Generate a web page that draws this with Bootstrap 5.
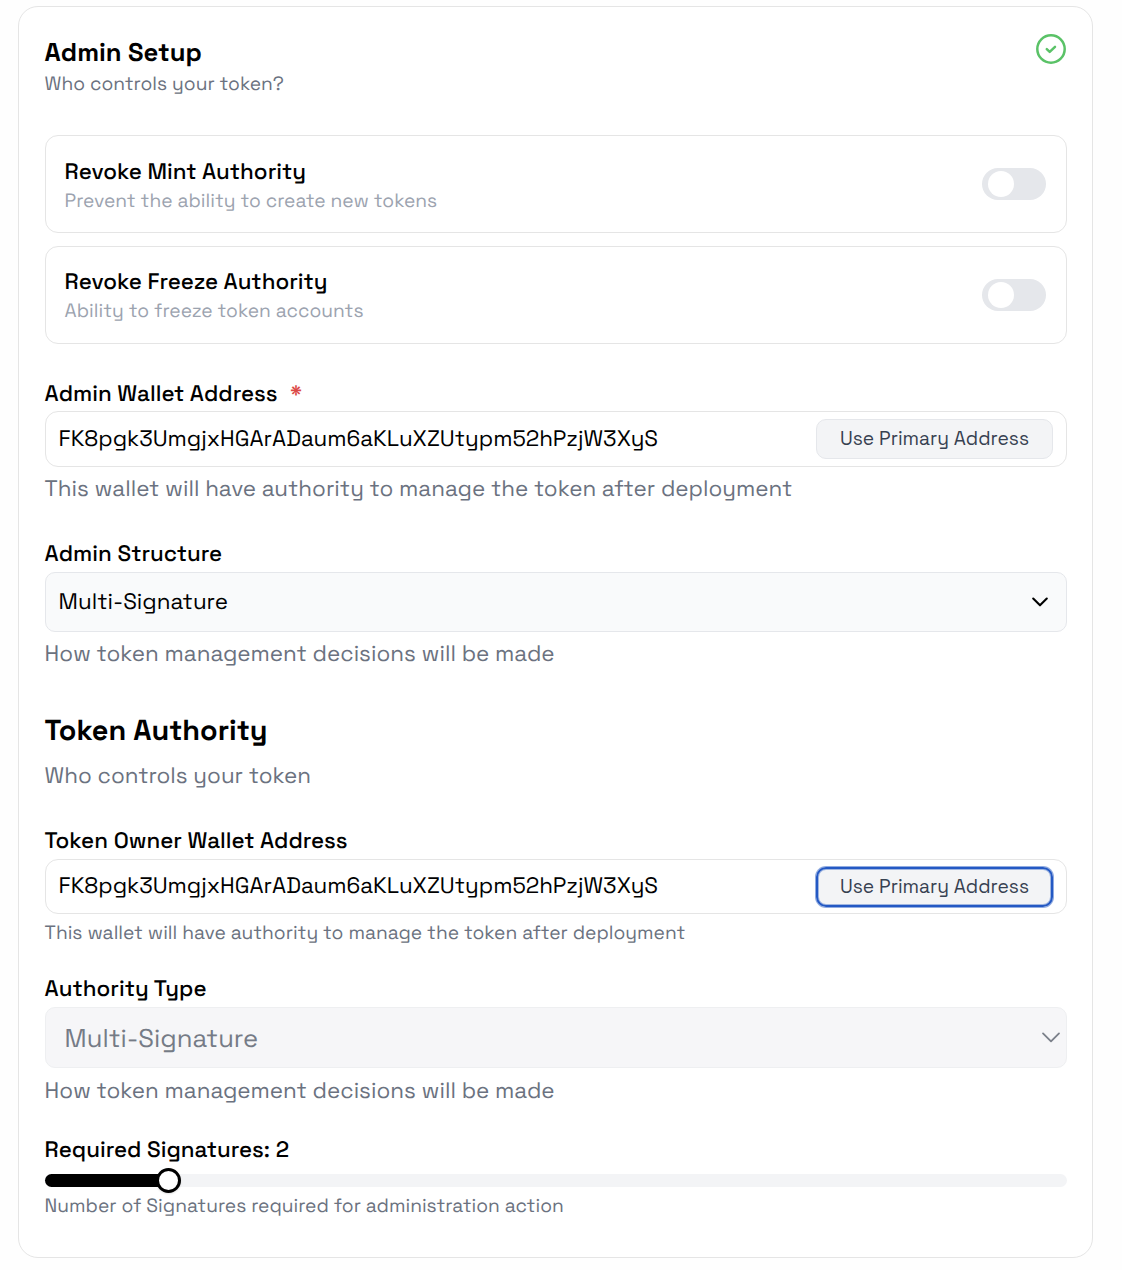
<!DOCTYPE html>
<html lang="en">
<head>
<meta charset="utf-8">
<meta name="viewport" content="width=device-width, initial-scale=1">
<title>Admin Setup</title>
<link href="https://cdn.jsdelivr.net/npm/bootstrap@5.3.0/dist/css/bootstrap.min.css" rel="stylesheet">
<style>
body{font-family:"Space Grotesk",Inter,sans-serif;color:#000;background:#fefefe;padding:6px 29px 0 18px;text-rendering:geometricPrecision}
.panel{--bs-card-border-radius:20px;--bs-card-border-color:#e5e5e5;--bs-card-bg:#fff;height:1252px;color:#000}
.panel>.card-body{padding:27px 25px 38px 26px}
.title-lg,.title-xl,.hint-sm,.hint-md,.field-label,.option-title,.option-text,.value-text{text-indent:-.4px}
.title-lg{font-size:25.6px;line-height:34px;font-weight:700;padding-top:2px}
.title-xl{font-size:28.8px;line-height:36px;font-weight:700;margin:45px 0 12px}
.hint-sm{font-size:19.2px;line-height:27px;color:#6b7280}
.hint-md{font-size:22.4px;line-height:29px;color:#6b7280}
.field-label{font-size:22.4px;line-height:28px;font-weight:500;padding-top:1px;margin-bottom:4px}
.option-box{height:98px;border:1px solid #e5e5e5;border-radius:13px;padding:21px 20px 0 19px}
.option-title{font-size:22.4px;line-height:30px;font-weight:500}
.option-text{font-size:19.2px;line-height:27px;color:#9ca3af}
.toggle{width:64px;height:32px;border-radius:16px;background:#e5e7eb;padding:3px 6px;margin-top:11px}
.toggle i{display:block;width:26.3px;height:26.3px;border-radius:50%;background:#fff}
.address-box{height:56px;border:1px solid #e5e5e5;border-radius:13px;background:#fff;padding:0 13px;font-size:22.4px;color:#000}
.btn-primary-address{width:237px;height:40px;padding:0;font-size:19.2px;line-height:38px;color:#374151;background:#f3f4f6;border:1px solid #e5e7eb;border-radius:10px}
.btn-primary-address.is-focused{outline:2px solid #2459c4;outline-offset:-2px;box-shadow:0 0 0 1px rgba(36,89,196,.5),inset 0 0 0 2px rgba(36,89,196,.4)}
.select-box{height:60px;border:1px solid #e5e7eb;border-radius:10px;background:#f9fafb;padding:0 13px;font-size:22.4px;color:#000}
.select-box.is-disabled{height:61px;background:#f6f6f8;border-color:#eeeff1;padding:0 4px 0 19px;font-size:25.6px;color:#757b86}
.required-star{color:#dc4a47;font-weight:700;margin-left:12.5px}
.slider-track{height:13px;border-radius:7px;background:#f3f4f6;margin-top:10px}
.slider-fill{height:13px;border-radius:7px 0 0 7px;background:#000}
.slider-knob{width:25px;height:25px;border:3px solid #000;border-radius:50%;background:#fff;margin-left:-12px;flex:none;box-shadow:0 1px 2px rgba(0,0,0,.12)}
</style>
</head>
<body>
<main class="card panel">
  <div class="card-body">
    <header class="d-flex justify-content-between align-items-start">
      <div>
        <h1 class="title-lg m-0">Admin Setup</h1>
        <p class="hint-sm m-0">Who controls your token?</p>
      </div>
      <svg width="32" height="32" viewBox="0 0 32 32" fill="none" stroke="#5ac267" stroke-linecap="round" stroke-linejoin="round" style="margin-top:-1px"><circle cx="16" cy="16" r="13.7" stroke-width="2.5"/><path d="M11.8 16.1l2.9 2.8 5.3-5" stroke-width="2.5"/></svg>
    </header>

    <section class="d-flex flex-column" style="margin-top:38px;gap:13px">
      <div class="option-box d-flex justify-content-between">
        <div>
          <div class="option-title">Revoke Mint Authority</div>
          <div class="option-text">Prevent the ability to create new tokens</div>
        </div>
        <div class="toggle" role="switch" aria-checked="false"><i></i></div>
      </div>
      <div class="option-box d-flex justify-content-between" style="padding-top:20px">
        <div>
          <div class="option-title">Revoke Freeze Authority</div>
          <div class="option-text">Ability to freeze token accounts</div>
        </div>
        <div class="toggle" role="switch" aria-checked="false" style="margin-top:12px"><i></i></div>
      </div>
    </section>

    <section style="margin-top:35px">
      <div class="field-label" style="margin-bottom:3px">Admin Wallet Address<span class="required-star">*</span></div>
      <div class="address-box d-flex align-items-center justify-content-between">
        <span class="value-text">FK8pgk3UmgjxHGArADaum6aKLuXZUtypm52hPzjW3XyS</span>
        <button type="button" class="btn btn-primary-address">Use Primary Address</button>
      </div>
      <div class="hint-md" style="margin-top:7px">This wallet will have authority to manage the token after deployment</div>
    </section>

    <section style="margin-top:36px">
      <div class="field-label">Admin Structure</div>
      <div class="select-box d-flex align-items-center justify-content-between">
        <span class="value-text">Multi-Signature</span>
        <svg width="26" height="26" viewBox="0 0 26 26" fill="none" stroke="#000" stroke-width="2.1" stroke-linecap="round" stroke-linejoin="round"><path d="M6.2 9.6l6.8 6.7 6.8-6.7"/></svg>
      </div>
      <div class="hint-md" style="margin-top:7px">How token management decisions will be made</div>
    </section>

    <h2 class="title-xl">Token Authority</h2>
    <p class="hint-md m-0">Who controls your token</p>

    <section style="margin-top:36px">
      <div class="field-label">Token Owner Wallet Address</div>
      <div class="address-box d-flex align-items-center justify-content-between" style="height:55px">
        <span class="value-text" style="line-height:31px;padding-bottom:2px">FK8pgk3UmgjxHGArADaum6aKLuXZUtypm52hPzjW3XyS</span>
        <button type="button" class="btn btn-primary-address is-focused">Use Primary Address</button>
      </div>
      <div class="hint-sm" style="margin-top:5px">This wallet will have authority to manage the token after deployment</div>
    </section>

    <section style="margin-top:28px">
      <div class="field-label">Authority Type</div>
      <div class="select-box is-disabled d-flex align-items-center justify-content-between">
        <span class="value-text" style="padding-top:4px">Multi-Signature</span>
        <svg width="22" height="22" viewBox="0 0 22 22" fill="none" stroke="#7b808a" stroke-width="1.8" stroke-linecap="round" stroke-linejoin="round"><path d="M3 6.4l8 8 8-8"/></svg>
      </div>
      <div class="hint-md" style="margin-top:8px">How token management decisions will be made</div>
    </section>

    <section style="margin-top:30px">
      <div class="field-label m-0">Required Signatures: 2</div>
      <div class="slider-track d-flex align-items-center" role="slider" aria-valuenow="2">
        <div class="slider-fill" style="width:12.05%"></div>
        <div class="slider-knob"></div>
      </div>
      <div class="hint-sm" style="margin-top:5px">Number of Signatures required for administration action</div>
    </section>
  </div>
</main>
<script src="https://cdn.jsdelivr.net/npm/bootstrap@5.3.0/dist/js/bootstrap.bundle.min.js"></script>
</body>
</html>
